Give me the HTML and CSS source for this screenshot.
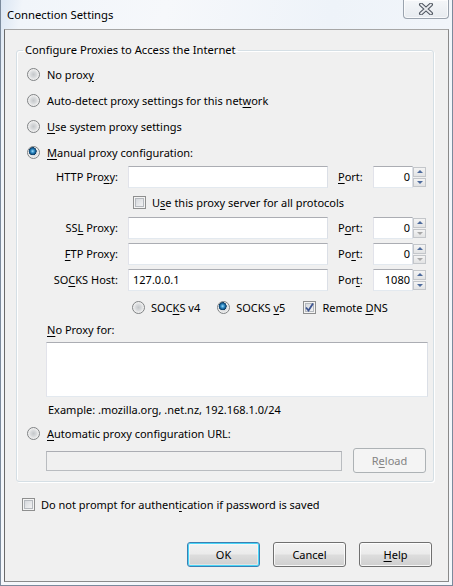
FILE: index.html
```html
<!DOCTYPE html>
<html>
<head>
<meta charset="utf-8">
<link rel="stylesheet" href="styles.css">
</head>
<body>
<div class="window">
  <div class="titlebar">
    <span class="title">Connection Settings</span>
    <span class="close"><svg width="16" height="12" viewBox="0 0 16 12"><path d="M3 1.5 L13 10.5 M13 1.5 L3 10.5" stroke="#4f5660" stroke-width="4" stroke-linecap="round"/><path d="M3 1.5 L13 10.5 M13 1.5 L3 10.5" stroke="#e8eaee" stroke-width="1.8" stroke-linecap="round"/></svg></span>
  </div>
  <div class="client">
    <fieldset class="group">
      <legend>Configure Proxies to Access the Internet</legend>
      <div class="radio-row first"><span class="radio"></span><span>No prox<u>y</u></span></div>
      <div class="radio-row"><span class="radio"></span><span>Auto-detect proxy settings for this net<u>w</u>ork</span></div>
      <div class="radio-row"><span class="radio"></span><span><u>U</u>se system proxy settings</span></div>
      <div class="radio-row"><span class="radio on"></span><span><u>M</u>anual proxy configuration:</span></div>

      <div class="proxy-grid">
        <label class="plabel">HTTP Pro<u>x</u>y:</label>
        <span class="text-input"></span>
        <label class="port"><u>P</u>ort:</label>
        <span class="port-input">0</span>
        <span class="spin"><span class="up"></span><span class="down"></span></span>

        <div class="all-row"><span class="check"></span><span>U<u>s</u>e this proxy server for all protocols</span></div>

        <label class="plabel">SS<u>L</u> Proxy:</label>
        <span class="text-input"></span>
        <label class="port">P<u>o</u>rt:</label>
        <span class="port-input">0</span>
        <span class="spin"><span class="up"></span><span class="down off"></span></span>

        <label class="plabel"><u>F</u>TP Proxy:</label>
        <span class="text-input"></span>
        <label class="port">Po<u>r</u>t:</label>
        <span class="port-input">0</span>
        <span class="spin"><span class="up"></span><span class="down off"></span></span>

        <label class="plabel">SO<u>C</u>KS Host:</label>
        <span class="text-input">127.0.0.1</span>
        <label class="port">Por<u>t</u>:</label>
        <span class="port-input">1080</span>
        <span class="spin"><span class="up"></span><span class="down"></span></span>
      </div>

      <div class="socks-row">
        <span class="radio"></span><span class="sv4">SOC<u>K</u>S v4</span>
        <span class="radio on"></span><span class="sv5">SOCKS <u>v</u>5</span>
        <span class="check on"><svg width="11" height="11" viewBox="0 0 11 11"><path d="M2 5.5 L4.5 8.5 L9 1.5" fill="none" stroke="#3d5591" stroke-width="1.8"/></svg></span><span>Remote <u>D</u>NS</span>
      </div>

      <div class="noproxy-label"><u>N</u>o Proxy for:</div>
      <div class="textarea"></div>
      <div class="example">Example: .mozilla.org, .net.nz, 192.168.1.0/24</div>
      <div class="radio-row auto"><span class="radio"></span><span><u>A</u>utomatic proxy configuration URL:</span></div>
      <div class="url-row">
        <span class="url-input"></span>
        <span class="btn disabled">R<u>e</u>load</span>
      </div>
    </fieldset>

    <div class="auth-row"><span class="check"></span><span>Do not prompt for authent<u>i</u>cation if password is saved</span></div>

    <div class="buttons">
      <span class="btn default">OK</span>
      <span class="btn">Cancel</span>
      <span class="btn"><u>H</u>elp</span>
    </div>
  </div>
</div>
</body>
</html>
```

FILE: styles.css
```css
html, body {
  margin: 0;
  padding: 0;
}
body {
  width: 453px;
  height: 586px;
  overflow: hidden;
  font-family: "Noto Sans", "Open Sans", sans-serif;
  font-size: 11px;
  color: #000;
}
u {
  text-decoration: underline;
  text-underline-offset: 2px;
}
.window {
  width: 453px;
  height: 586px;
  box-sizing: border-box;
  background: linear-gradient(100deg, #dbe6f3 0%, #f1f5fa 4%, #f6f8fb 30%, #eef3f9 60%, #f4f7fb 100%);
  border: 1px solid #7b8a9c;
  border-top: none;
  padding: 0 3px 3px 3px;
  display: flex;
  flex-direction: column;
}
.titlebar {
  height: 29px;
  display: flex;
  justify-content: space-between;
  align-items: flex-start;
}
.title {
  margin: 7px 0 0 3px;
  line-height: 16px;
  font-size: 11.3px;
  color: #000;
}
.close {
  width: 44px;
  height: 18px;
  border: 1px solid #9aa3ae;
  border-top: none;
  border-radius: 0 0 4px 4px;
  background: linear-gradient(#f4f6f9, #e7ebf0);
  display: flex;
  align-items: center;
  justify-content: center;
  box-shadow: inset 0 0 0 1px rgba(255,255,255,0.7);
}
.client {
  flex: 1;
  background: #f0f0f0;
  border: 1px solid #8a8a8a;
  border-left-color: #6a6a6a;
  border-top-color: #a6a6a6;
  display: flex;
  flex-direction: column;
}
.group {
  margin: 12px 14px 0 11px;
  padding: 0 0 8px 0;
  border: 1px solid #d5dfe5;
  border-radius: 3px;
  box-shadow: inset 1px 1px 0 #fff, 1px 1px 0 #fff;
  min-width: 0;
}
.group legend {
  margin-left: 6px;
  padding: 0 2px;
  line-height: 16px;
  font-size: 11.2px;
  color: #000;
}
.radio-row {
  height: 26px;
  display: flex;
  align-items: center;
  padding-left: 10px;
  gap: 7px;
}
.radio-row.first {
  margin-top: 3px;
}
.radio {
  width: 13px;
  height: 13px;
  box-sizing: border-box;
  border-radius: 50%;
  border: 1px solid #7f8284;
  background: radial-gradient(circle at 50% 50%, #c4c7ca 0, #d9dbdd 3px, #eeeeee 5px, #fcfcfc 6px);
  flex: none;
}
.radio.on {
  background:
    radial-gradient(circle at 42% 38%, #a9ddf8 0, #3a98d0 1.5px, #13568a 3px, #0c3c62 3.8px, rgba(0,0,0,0) 4.2px),
    radial-gradient(circle at 50% 50%, #c4c7ca 0, #d9dbdd 3px, #eeeeee 5px, #fcfcfc 6px);
}
.check {
  width: 13px;
  height: 13px;
  box-sizing: border-box;
  border: 1px solid #8e8f8f;
  background: linear-gradient(135deg, #cdd1d6 0%, #e9eaec 60%, #f8f8f8 100%);
  box-shadow: inset 0 0 0 1px #f4f4f4, inset 0 0 0 2px #b5b9be;
  flex: none;
  display: flex;
  align-items: center;
  justify-content: center;
}
.proxy-grid {
  display: grid;
  grid-template-columns: 111px 210px 35px 40px 13px;
  column-gap: 0;
  row-gap: 4px;
  margin-top: 1px;
  align-items: center;
}
.plabel {
  text-align: right;
  line-height: 22px;
  padding-right: 10px;
}
.port {
  line-height: 22px;
}
.text-input, .port-input {
  height: 22px;
  box-sizing: border-box;
  background: #fff;
  border: 1px solid #e3e9ef;
  border-top-color: #abadb3;
  border-left-color: #e2e3ea;
  border-right-color: #dbdfe6;
  line-height: 20px;
  padding: 0 4px;
  color: #000;
}
.proxy-grid > .text-input {
  margin-right: 10px;
}
.proxy-grid > .port-input {
  text-align: right;
  padding-right: 2px;
}
.spin {
  display: flex;
  flex-direction: column;
  gap: 1px;
  height: 20px;
  width: 13px;
}
.spin span {
  flex: 1;
  box-sizing: border-box;
  border: 1px solid #c3c6ca;
  background: linear-gradient(#f4f4f4, #e2e3e4);
  display: flex;
  align-items: center;
  justify-content: center;
}
.spin .up::after {
  content: "";
  border-left: 3px solid transparent;
  border-right: 3px solid transparent;
  border-bottom: 3px solid #4d6a9c;
}
.spin .down::after {
  content: "";
  border-left: 3px solid transparent;
  border-right: 3px solid transparent;
  border-top: 3px solid #4d6a9c;
}
.spin .down.off::after {
  border-top-color: #a8a8a8;
}
.all-row {
  grid-column: 2 / 6;
  height: 29px;
  margin: -4px 0;
  display: flex;
  align-items: center;
  gap: 6px;
  padding-left: 5px;
}
.socks-row {
  height: 24px;
  margin-top: 4px;
  display: flex;
  align-items: center;
  padding-left: 115px;
}
.socks-row .sv4 { margin-left: 6px; margin-right: 17px; }
.socks-row .sv5 { margin-left: 6px; margin-right: 18px; }
.socks-row .check { margin-right: 6px; }
.noproxy-label {
  margin: 3px 0 0 30px;
  line-height: 16px;
}
.textarea {
  height: 55px;
  margin: 4px 5px 0 29px;
  box-sizing: border-box;
  background: #fff;
  border: 1px solid #e3e9ef;
  border-top-color: #abadb3;
  border-left-color: #e2e3ea;
  border-right-color: #dbdfe6;
}
.example {
  margin: 5px 0 0 31px;
  line-height: 16px;
}
.radio-row.auto {
  height: 24px;
  margin-top: 3px;
}
.url-row {
  display: flex;
  align-items: center;
  margin: 3px 7px 0 29px;
  gap: 11px;
}
.url-input {
  width: 296px;
  height: 20px;
  box-sizing: border-box;
  background: #f0f0f0;
  border: 1px solid #b9bcc0;
  border-top-color: #abadb3;
}
.btn {
  width: 73px;
  height: 25px;
  box-sizing: border-box;
  border: 1px solid #707070;
  border-radius: 3px;
  background: linear-gradient(#f2f2f2 0%, #ebebeb 48%, #dddddd 52%, #cfcfcf 100%);
  box-shadow: inset 0 0 0 1px rgba(255,255,255,0.8);
  display: flex;
  align-items: center;
  justify-content: center;
  color: #000;
}
.btn.disabled {
  border-color: #adb2b5;
  background: #f4f4f4;
  color: #838383;
  box-shadow: none;
}
.btn.default {
  border-color: #3c7fb1;
  box-shadow: inset 0 0 0 1px #48d5f8, inset 0 0 0 2px rgba(255,255,255,0.4);
}
.auth-row {
  display: flex;
  align-items: center;
  gap: 6px;
  margin: 14px 0 0 17px;
  height: 16px;
}
.buttons {
  display: flex;
  justify-content: flex-end;
  gap: 13px;
  margin: 30px 16px 0 0;
}
```
